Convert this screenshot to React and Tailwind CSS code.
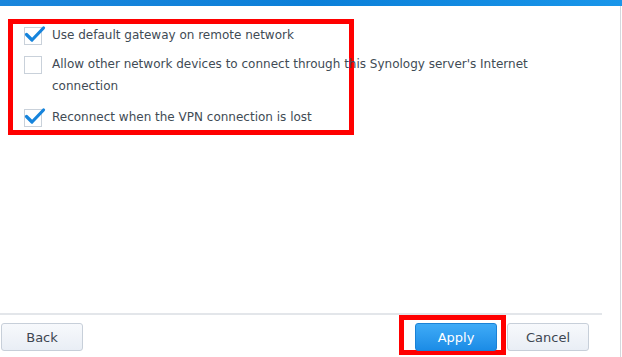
import React from 'react';

// ── Sub-components ────────────────────────────────────────────────────────────

function CheckBox({ checked }) {
  return (
    <svg width="22" height="20" viewBox="0 0 22 20" className="shrink-0 overflow-visible">
      <rect x="0.5" y="2.5" width="17" height="17" fill="#fff" stroke="#c9d1da" />
      {checked && (
        <path
          d="M2.5 9.5 L8 15 L19.5 3"
          fill="none"
          stroke="#1684dc"
          strokeWidth="3.2"
          strokeLinecap="round"
          strokeLinejoin="round"
        />
      )}
    </svg>
  );
}

function Option({ checked, children, className = '' }) {
  return (
    <div className={`flex items-start gap-[6px] ${className}`}>
      <div className="pt-[1px]">
        <CheckBox checked={checked} />
      </div>
      <p className="w-[520px] shrink-0 text-[12px] leading-[22px] text-[#414b55]">{children}</p>
    </div>
  );
}

function Button({ primary, children }) {
  const tone = primary
    ? 'bg-gradient-to-b from-[#3eabf7] to-[#1b8ce6] border-[#1a82d6] text-white'
    : 'bg-gradient-to-b from-[#f7f9fc] to-[#e9eef5] border-[#c7cfd9] text-[#3d4651]';
  return (
    <button
      className={`w-[82px] h-[28px] rounded-[3px] border text-[13px] leading-none ${tone}`}
    >
      {children}
    </button>
  );
}

// ── Main component ────────────────────────────────────────────────────────────

export default function App() {
  return (
    <div
      className="w-[622px] h-[357px] bg-white flex flex-col overflow-hidden"
      style={{ fontFamily: '"DejaVu Sans", Verdana, sans-serif' }}
    >
      {/* ── Title strip ─────────────────────────────────────────── */}
      <div className="h-[6px] shrink-0 bg-gradient-to-r from-[#1a86dc] via-[#0b7fd8] to-[#1996ea]" />

      <div className="flex flex-1 min-h-0">
        <div className="flex-1 flex flex-col">
          {/* ── Options ───────────────────────────────────────── */}
          <div className="flex-1 pt-[13px] pl-[8px]">
            <div className="w-[346px] h-[116px] border-[5px] border-[#ff0000] pl-[11px] flex flex-col gap-[7px]">
              <Option checked>Use default gateway on remote network</Option>
              <Option>
                Allow other network devices to connect through this Synology server's Internet connection
              </Option>
              <Option checked className="mt-[2px]">
                Reconnect when the VPN connection is lost
              </Option>
            </div>
          </div>

          {/* ── Footer ─────────────────────────────────────────── */}
          <div className="w-[602px] h-[2px] bg-[#e3e6ea]" />
          <div className="h-[42px] flex items-start pl-[1px] pr-[25px]">
            <div className="pt-[8px]">
              <Button>Back</Button>
            </div>
            <div className="ml-auto flex items-start">
              <div className="border-[5px] border-[#ff0000] pl-[11px] pr-[4px] pt-[3px] h-[40px]">
                <Button primary>Apply</Button>
              </div>
              <div className="pt-[8px] ml-[1px]">
                <Button>Cancel</Button>
              </div>
            </div>
          </div>
        </div>

        {/* ── Right edge ─────────────────────────────────────────── */}
        <div className="w-[8px] shrink-0 flex justify-end pr-[1px]">
          <div className="w-[1px] bg-[#d4d8dd]" />
        </div>
      </div>
    </div>
  );
}
